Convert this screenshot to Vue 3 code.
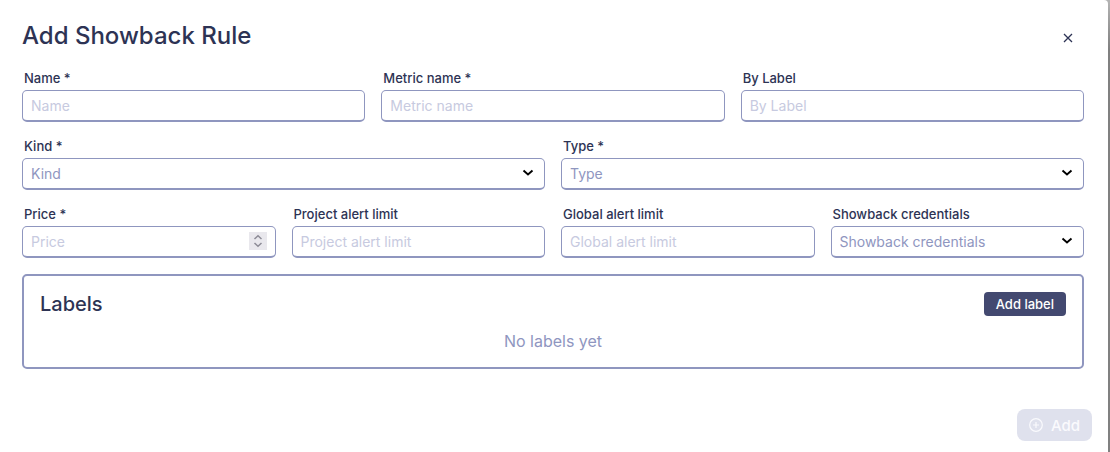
<script setup>
import { reactive } from 'vue'

const rows = [
  {
    columns: 'three',
    fields: [
      { id: 'name', label: 'Name', required: true, kind: 'text' },
      { id: 'metric', label: 'Metric name', required: true, kind: 'text' },
      { id: 'by-label', label: 'By Label', kind: 'text' },
    ],
  },
  {
    columns: 'two',
    fields: [
      { id: 'kind', label: 'Kind', required: true, kind: 'select' },
      { id: 'type', label: 'Type', required: true, kind: 'select' },
    ],
  },
  {
    columns: 'four',
    fields: [
      { id: 'price', label: 'Price', required: true, kind: 'number' },
      { id: 'project-limit', label: 'Project alert limit', kind: 'text' },
      { id: 'global-limit', label: 'Global alert limit', kind: 'text' },
      { id: 'credentials', label: 'Showback credentials', kind: 'select' },
    ],
  },
]

const values = reactive({
  name: '',
  metric: '',
  'by-label': '',
  kind: '',
  type: '',
  price: '',
  'project-limit': '',
  'global-limit': '',
  credentials: '',
})
</script>

<template>
  <div class="backdrop">
    <main class="dialog" role="dialog" aria-labelledby="dialog-title">
      <header class="header">
        <h1 id="dialog-title" class="title">Add Showback Rule</h1>
        <button class="close" type="button" aria-label="Close">
          <svg viewBox="0 0 10 10" width="10" height="10" aria-hidden="true">
            <path d="M1 1l8 8M9 1l-8 8" fill="none" stroke="currentColor" stroke-width="1.3" />
          </svg>
        </button>
      </header>

      <form class="form" @submit.prevent>
        <div v-for="row in rows" :key="row.columns" class="row" :class="row.columns">
          <div v-for="field in row.fields" :key="field.id" class="field">
            <label class="label" :for="field.id">{{ field.label }}{{ field.required ? ' *' : '' }}</label>
            <div class="control-wrap">
              <select v-if="field.kind === 'select'" :id="field.id" v-model="values[field.id]" class="control select">
                <option value="">{{ field.label }}</option>
              </select>
              <input
                v-else
                :id="field.id"
                v-model="values[field.id]"
                class="control"
                :type="field.kind"
                :placeholder="field.label"
              />
              <svg v-if="field.kind === 'select'" class="chevron" viewBox="0 0 12 8" width="12" height="8" aria-hidden="true">
                <path d="M1.500 1.500L6 5.500l4.500-4" fill="none" stroke="currentColor" stroke-width="1.900" />
              </svg>
              <svg v-if="field.kind === 'number'" class="spinner" viewBox="0 0 18 18" width="18" height="18" aria-hidden="true">
                <path d="M5.500 7L9 3.800L12.500 7M5.500 11L9 14.200L12.500 11" fill="none" stroke="currentColor" stroke-width="1.500" />
              </svg>
            </div>
          </div>
        </div>

        <section class="labels">
          <div class="labels-head">
            <h2 class="labels-title">Labels</h2>
            <button class="add-label" type="button">Add label</button>
          </div>
          <p class="empty">No labels yet</p>
        </section>

        <footer class="footer">
          <button class="submit" type="submit" disabled>
            <svg viewBox="0 0 14 14" width="14" height="14" aria-hidden="true">
              <circle cx="7" cy="7" r="6.300" fill="none" stroke="currentColor" stroke-width="1.200" />
              <path d="M7 4v6M4 7h6" fill="none" stroke="currentColor" stroke-width="1.200" />
            </svg>
            Add
          </button>
        </footer>
      </form>
    </main>
  </div>
</template>

<style>
body {
  background: #808080;
}
</style>

<style scoped>
.backdrop {
  padding-right: 2px;
  background: linear-gradient(#b4b4b4, #808080 50px);
  font-family: Inter, "Liberation Sans", sans-serif;
  color: #2d3354;
}
.dialog {
  box-sizing: border-box;
  padding: 20px 24px 11px 22px;
  background: #fff;
  border-top-right-radius: 4px;
}
.header {
  display: flex;
  align-items: center;
  justify-content: space-between;
  padding-right: 8px;
  margin-bottom: 18px;
}
.title {
  margin: 0;
  font-size: 24px;
  line-height: 32px;
  font-weight: 500;
}
.close {
  display: flex;
  align-items: center;
  justify-content: center;
  width: 16px;
  height: 16px;
  padding: 0;
  margin-top: 4px;
  border: 0;
  background: none;
  color: #2d3354;
}
.form {
  display: flex;
  flex-direction: column;
  gap: 16px;
}
.row {
  display: grid;
  gap: 16px;
}
.two {
  grid-template-columns: repeat(2, minmax(0, 1fr));
}
.three {
  grid-template-columns: repeat(3, minmax(0, 1fr));
}
.four {
  grid-template-columns: repeat(4, minmax(0, 1fr));
}
.label {
  display: block;
  padding: 0 2px 4px;
  font-size: 13px;
  line-height: 16px;
  font-weight: 500;
}
.control {
  display: block;
  box-sizing: border-box;
  width: 100%;
  height: 32px;
  padding: 0 8px;
  border: 1px solid #8f96bf;
  border-bottom-width: 2px;
  border-radius: 5px;
  background: #fff;
  color: #8f96bf;
  font-family: inherit;
  font-size: 14px;
  font-weight: 400;
}
.control::placeholder {
  color: #c7cae0;
  opacity: 1;
}
.control[type="number"] {
  appearance: textfield;
}
.control[type="number"]::-webkit-inner-spin-button {
  appearance: none;
  margin: 0;
}
.control-wrap {
  position: relative;
}
.select {
  appearance: none;
}
.chevron {
  position: absolute;
  top: 11px;
  right: 11px;
  color: #000;
  pointer-events: none;
}
.spinner {
  position: absolute;
  top: 6px;
  right: 9px;
  background: #e9e8ed;
  color: #8c8b96;
  pointer-events: none;
}
.labels {
  padding: 16px;
  border: 2px solid #8f96bf;
  border-radius: 5px;
}
.labels-head {
  display: flex;
  align-items: center;
  justify-content: space-between;
  margin-bottom: 15px;
}
.labels-title {
  margin: 0;
  font-size: 20px;
  line-height: 24px;
  font-weight: 500;
}
.add-label {
  height: 24px;
  padding: 0 12px;
  border: 0;
  border-radius: 4px;
  background: #434970;
  color: #fff;
  font-family: inherit;
  font-size: 13px;
  font-weight: 500;
}
.empty {
  margin: 0;
  font-size: 16px;
  line-height: 20px;
  font-weight: 400;
  text-align: center;
  color: #8f96bf;
}
.footer {
  display: flex;
  justify-content: flex-end;
  margin-top: 24px;
  margin-right: -8px;
}
.submit {
  display: flex;
  align-items: center;
  gap: 8px;
  height: 32px;
  padding: 0 12px;
  border: 0;
  border-radius: 8px;
  background: #dfe1ed;
  color: #fafafd;
  font-family: inherit;
  font-size: 15px;
  font-weight: 500;
}
</style>
